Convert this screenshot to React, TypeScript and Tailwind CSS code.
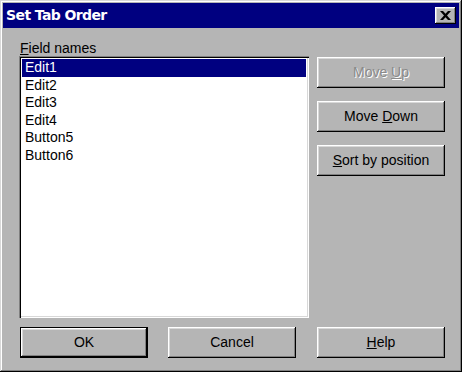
import type { ReactNode } from 'react';

const bevel =
  'shadow-[inset_-1px_-1px_#000,inset_1px_1px_#fff,inset_-2px_-2px_#808080,inset_2px_2px_#d8d8d8]';

function Btn({ children, disabled, isDefault }: { children: ReactNode; disabled?: boolean; isDefault?: boolean }) {
  if (isDefault) {
    return (
      <div className="w-[128px] h-[31px] border border-black">
        <div className={`w-full h-full flex items-center justify-center ${bevel}`}>{children}</div>
      </div>
    );
  }
  return (
    <div
      className={`w-[128px] h-[31px] flex items-center justify-center ${bevel} ${
        disabled ? 'text-[#8a8a8a] [text-shadow:1px_1px_0_#fff]' : 'text-black'
      }`}
    >
      {children}
    </div>
  );
}

const fields = ['Edit1', 'Edit2', 'Edit3', 'Edit4', 'Button5', 'Button6'];

export default function App() {
  return (
    <div
      className="w-[462px] h-[372px] bg-[#b5b5b5] p-[3px] text-[14px] text-black shadow-[inset_-1px_-1px_#000,inset_1px_1px_#d8d8d8,inset_-2px_-2px_#808080,inset_2px_2px_#fff]"
      style={{ fontFamily: '"Liberation Sans", Arial, sans-serif' }}
    >
      {/* title bar */}
      <div className="h-[25px] bg-[#000080] flex items-center justify-between pl-[3px] pr-[3px]">
        <span className="text-white font-bold text-[14px] tracking-[-0.6px] font-['DejaVu_Sans',sans-serif]">
          Set Tab Order
        </span>
        <div className={`w-[21px] h-[17px] flex items-center justify-center bg-[#b5b5b5] ${bevel}`}>
          <svg width="11" height="9" viewBox="0 0 11 9" className="mt-[-1px]">
            <path d="M0 0h3l2.5 2.7L8 0h3L7 4.5 11 9H8L5.5 6.3 3 9H0l4-4.5z" fill="#000" />
          </svg>
        </div>
      </div>

      <div className="flex flex-col pl-[16px]">
        <div className="flex">
          <div className="w-[290px] flex flex-col">
            <div className="mt-[12px] h-[16px] leading-[16px] pl-[1px]">
              <u>F</u>ield names
            </div>
            <div className="h-[262px] bg-white p-[3px] shadow-[inset_1px_1px_#808080,inset_2px_2px_#000,inset_-1px_-1px_#fff,inset_-2px_-2px_#d8d8d8]">
              {fields.map((f, i) => (
                <div
                  key={f}
                  className={`h-[17.6px] leading-[17.6px] pl-[3px] ${i === 0 ? 'bg-[#000080] text-white' : ''}`}
                >
                  {f}
                </div>
              ))}
            </div>
          </div>
          <div className="ml-[8px] pt-[29px] flex flex-col gap-[13px]">
            <Btn disabled>
              <span>
                Move <u>U</u>p
              </span>
            </Btn>
            <Btn>
              <span>
                Move <u>D</u>own
              </span>
            </Btn>
            <Btn>
              <span>
                <u>S</u>ort by position
              </span>
            </Btn>
          </div>
        </div>

        <div className="mt-[9px] flex pl-[1px]">
          <Btn isDefault>OK</Btn>
          <div className="ml-[20px]">
            <Btn>Cancel</Btn>
          </div>
          <div className="ml-[21px]">
            <Btn>
              <span>
                <u>H</u>elp
              </span>
            </Btn>
          </div>
        </div>
      </div>
    </div>
  );
}
